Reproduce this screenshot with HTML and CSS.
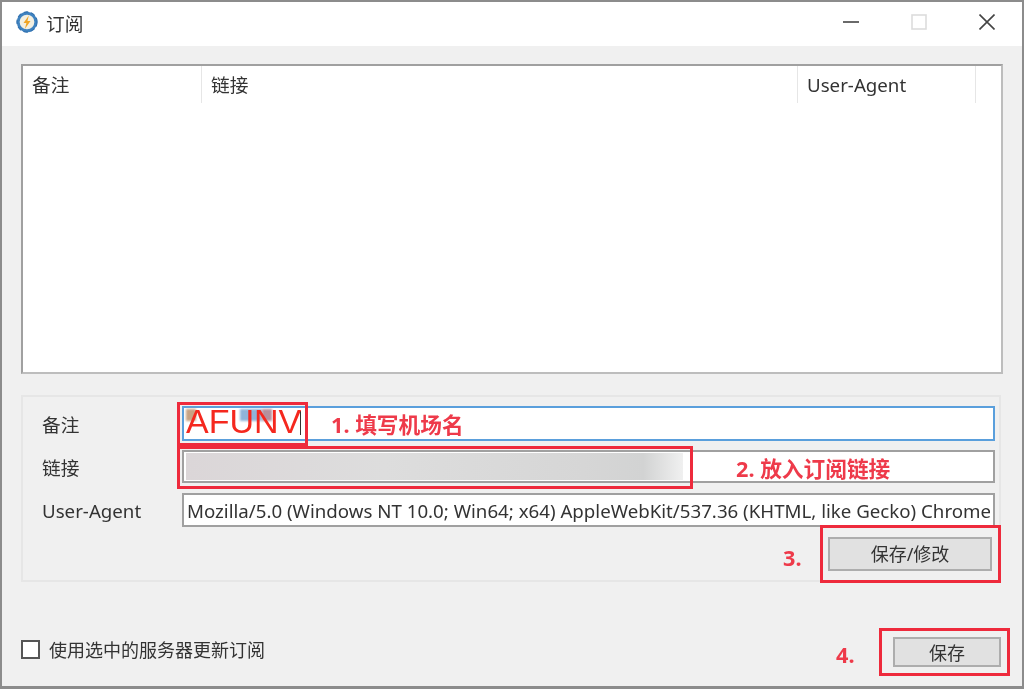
FILE: index.html

```html
<!DOCTYPE html>
<html>
<head>
    <title>订阅</title>
    <link rel="stylesheet" href="styles.css">
</head>
<body>
    <div class="window">
        <div class="titlebar">
            <svg class="app-icon" viewBox="0 0 24 24">
                <circle cx="12" cy="12" r="8" fill="#f3efe0"/>
                <circle cx="12" cy="12" r="9.6" fill="none" stroke="#3f82bf" stroke-width="3.2"/>
                <circle cx="12" cy="12" r="11" fill="none" stroke="#2f6fae" stroke-width="1.2" stroke-dasharray="5 3"/>
                <path d="M14 5 8.2 13h3.2l-1.8 6.5 6.2-8.7h-3.3z" fill="#f0a524"/>
            </svg>
            <span class="window-title">订阅</span>
            <div class="window-buttons">
                <svg class="win-btn" viewBox="0 0 16 16"><path d="M0 8h16" stroke="#444" stroke-width="1.6"/></svg>
                <svg class="win-btn" viewBox="0 0 16 16"><rect x="1" y="1" width="14" height="14" fill="none" stroke="#dcdcdc" stroke-width="1.6"/></svg>
                <svg class="win-btn" viewBox="0 0 16 16"><path d="M.5.5l15 15M15.500.5l-15 15" stroke="#444" stroke-width="1.6"/></svg>
            </div>
        </div>

        <div class="content">
            <div class="list">
                <div class="list-head">
                    <div class="col col-remark">备注</div>
                    <div class="col col-link">链接</div>
                    <div class="col col-agent">User-Agent</div>
                </div>
            </div>

            <div class="group">
                <div class="form-row row-remark">
                    <label>备注</label>
                    <input class="field field-focus" type="text">
                </div>
                <div class="form-row row-link">
                    <label>链接</label>
                    <input class="field" type="text">
                </div>
                <div class="form-row row-agent">
                    <label>User-Agent</label>
                    <input class="field" type="text" value="Mozilla/5.0 (Windows NT 10.0; Win64; x64) AppleWebKit/537.36 (KHTML, like Gecko) Chrome/91.0.4472.124 Safari/537.36">
                </div>
                <div class="group-actions">
                    <button class="button button-wide">保存/修改</button>
                </div>
            </div>

            <div class="footer">
                <label class="check"><span class="check-box"></span>使用选中的服务器更新订阅</label>
                <button class="button button-save">保存</button>
            </div>
        </div>

        <!-- blurred out values and the red notes drawn over the screenshot -->
        <div class="smudge smudge-tan"></div>
        <div class="smudge smudge-blue"></div>
        <div class="smudge smudge-mauve"></div>
        <div class="blur-link"></div>
        <div class="caret"></div>

        <div class="mark mark-1"></div>
        <div class="mark mark-2"></div>
        <div class="mark mark-3"></div>
        <div class="mark mark-4"></div>
        <div class="site-name">AFUNV</div>
        <div class="note note-1">1. 填写机场名</div>
        <div class="note note-2">2. 放入订阅链接</div>
        <div class="note note-3">3.</div>
        <div class="note note-4">4.</div>
    </div>
</body>
</html>
```

FILE: styles.css

```css
* {
    box-sizing: border-box;
}
body {
    margin: 0;
    font-family: "Noto Sans", "Noto Sans CJK SC", sans-serif;
    font-size: 18.7px;
    color: #333;
    background-color: #fff;
}
.window {
    position: relative;
    width: 1024px;
    height: 689px;
    border: 2px solid #8c8c8c;
    border-bottom-width: 3px;
    background-color: #f0f0f0;
    overflow: hidden;
    filter: blur(0.4px);
}
.titlebar {
    display: flex;
    align-items: center;
    height: 44px;
    padding: 0 27px 4px 14px;
    background-color: #fff;
}
.app-icon {
    width: 22px;
    height: 22px;
}
.window-title {
    margin-left: 8px;
}
.window-buttons {
    display: flex;
    gap: 52px;
    margin-left: auto;
}
.win-btn {
    width: 16px;
    height: 16px;
}
.content {
    display: flex;
    flex-direction: column;
    padding: 18px 19px 0;
}
.list {
    height: 310px;
    background-color: #fff;
    border: 2px solid #a0a0a0;
    border-right-color: #bdbdbd;
    border-bottom-color: #bdbdbd;
}
.list-head {
    display: flex;
    height: 37px;
}
.col {
    padding-left: 9px;
    line-height: 37px;
    border-right: 1px solid #e6e6e6;
}
.col-remark {
    width: 179px;
}
.col-link {
    width: 596px;
}
.col-agent {
    width: 178px;
}
.group {
    display: flex;
    flex-direction: column;
    height: 187px;
    margin-top: 21px;
    margin-right: 2px;
    padding: 9px 4px 0 19px;
    border: 2px solid #e6e6e6;
}
.form-row {
    display: flex;
    align-items: center;
}
.form-row label {
    width: 140px;
}
.row-remark .field {
    height: 35px;
}
.row-link {
    margin-top: 9px;
}
.row-link .field {
    height: 33px;
}
.row-agent {
    margin-top: 10px;
}
.row-agent .field {
    height: 34px;
}
.field {
    flex: 1;
    min-width: 0;
    padding: 0 3px;
    font-family: inherit;
    font-size: 18.7px;
    color: #333;
    background-color: #fff;
    border: 2px solid #a0a0a0;
    border-radius: 0;
    outline: none;
}
.field-focus {
    border-color: #5a9fdc;
}
.group-actions {
    display: flex;
    justify-content: flex-end;
    margin-top: 10px;
    padding-right: 3px;
}
.button {
    height: 34px;
    padding: 0 0 2px;
    font-family: inherit;
    font-size: 18px;
    color: #333;
    background-color: #e1e1e1;
    border: 2px solid #adadad;
    border-radius: 0;
}
.button-wide {
    width: 164px;
}
.button-save {
    width: 108px;
    height: 30px;
    margin-right: 2px;
}
.footer {
    display: flex;
    align-items: center;
    justify-content: space-between;
    margin-top: 54px;
}
.check {
    display: flex;
    align-items: center;
    gap: 9px;
    margin-bottom: 5px;
    font-size: 18px;
}
.check-box {
    width: 19px;
    height: 19px;
    background-color: #fff;
    border: 2px solid #555;
}
.smudge {
    position: absolute;
    top: 407px;
    height: 12px;
    filter: blur(1px);
}
.smudge-tan {
    left: 184px;
    width: 10px;
    background-color: #c8a384;
}
.smudge-blue {
    left: 238px;
    width: 22px;
    background-color: #8fb4d9;
}
.smudge-mauve {
    left: 260px;
    width: 10px;
    background-color: #b58f9c;
}
.blur-link {
    position: absolute;
    left: 184px;
    top: 451px;
    width: 497px;
    height: 27px;
    background: linear-gradient(90deg, #dbd6d8, #dddddd 40%, #d6d6d6 80%, #d2d3d3 92%, #f0f0f0);
}
.caret {
    position: absolute;
    left: 298px;
    top: 409px;
    width: 1px;
    height: 24px;
    background-color: #333;
}
.mark {
    position: absolute;
    border: 3px solid #ee2a3c;
}
.mark-1 {
    left: 175px;
    top: 400px;
    width: 131px;
    height: 44px;
}
.mark-2 {
    left: 175px;
    top: 444px;
    width: 516px;
    height: 43px;
}
.mark-3 {
    left: 818px;
    top: 523px;
    width: 181px;
    height: 58px;
}
.mark-4 {
    left: 877px;
    top: 626px;
    width: 131px;
    height: 48px;
}
.site-name {
    position: absolute;
    left: 184px;
    top: 399px;
    font-family: "Liberation Sans", sans-serif;
    font-size: 34px;
    line-height: 40px;
    color: #f5281e;
}
.note {
    position: absolute;
    font-size: 21.7px;
    font-weight: 700;
    line-height: 28px;
    color: #ee3a4a;
    white-space: nowrap;
}
.note-1 {
    left: 329px;
    top: 409px;
}
.note-2 {
    left: 734px;
    top: 453px;
}
.note-3 {
    left: 781px;
    top: 542px;
}
.note-4 {
    left: 834px;
    top: 639px;
}
```
